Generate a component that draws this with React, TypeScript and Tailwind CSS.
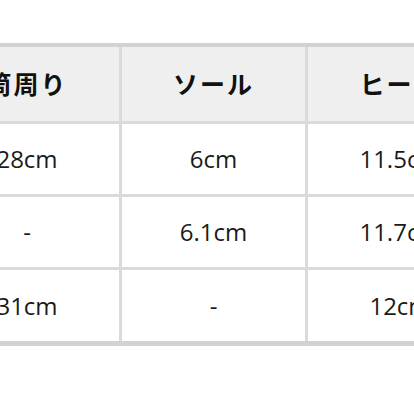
import React from "react";

const headers = ["筒周り", "ソール", "ヒール"];
const rows = [
  ["28cm", "6cm", "11.5cm"],
  ["-", "6.1cm", "11.7cm"],
  ["31cm", "-", "12cm"],
];

export default function App() {
  return (
    <div className="w-[414px] h-[414px] overflow-hidden bg-white pt-[43px]">
      <div className="ml-[-65px] w-[560px] border-t-4 border-b-[5px] border-[#d2d2d2] bg-[#dadada]">
        <div className="grid grid-cols-[184px_183px_184px] gap-x-[3px] gap-y-[3px]">
          {headers.map((h) => (
            <div
              key={h}
              className="h-[74px] bg-[#efefef] flex items-center justify-center text-[25px] font-bold tracking-[0.08em] text-[#111]"
              style={{ fontFamily: '"Noto Sans CJK JP", "Noto Sans", sans-serif' }}
            >
              {h}
            </div>
          ))}
          {rows.map((r, i) =>
            r.map((c, j) => (
              <div
                key={`${i}-${j}`}
                className={`${i === 2 ? "h-[71px]" : "h-[70px]"} bg-white flex items-center justify-center text-[24px] text-[#1a1a1a]`}
                style={{ fontFamily: '"Open Sans", "Noto Sans", sans-serif' }}
              >
                {c}
              </div>
            ))
          )}
        </div>
      </div>
    </div>
  );
}
